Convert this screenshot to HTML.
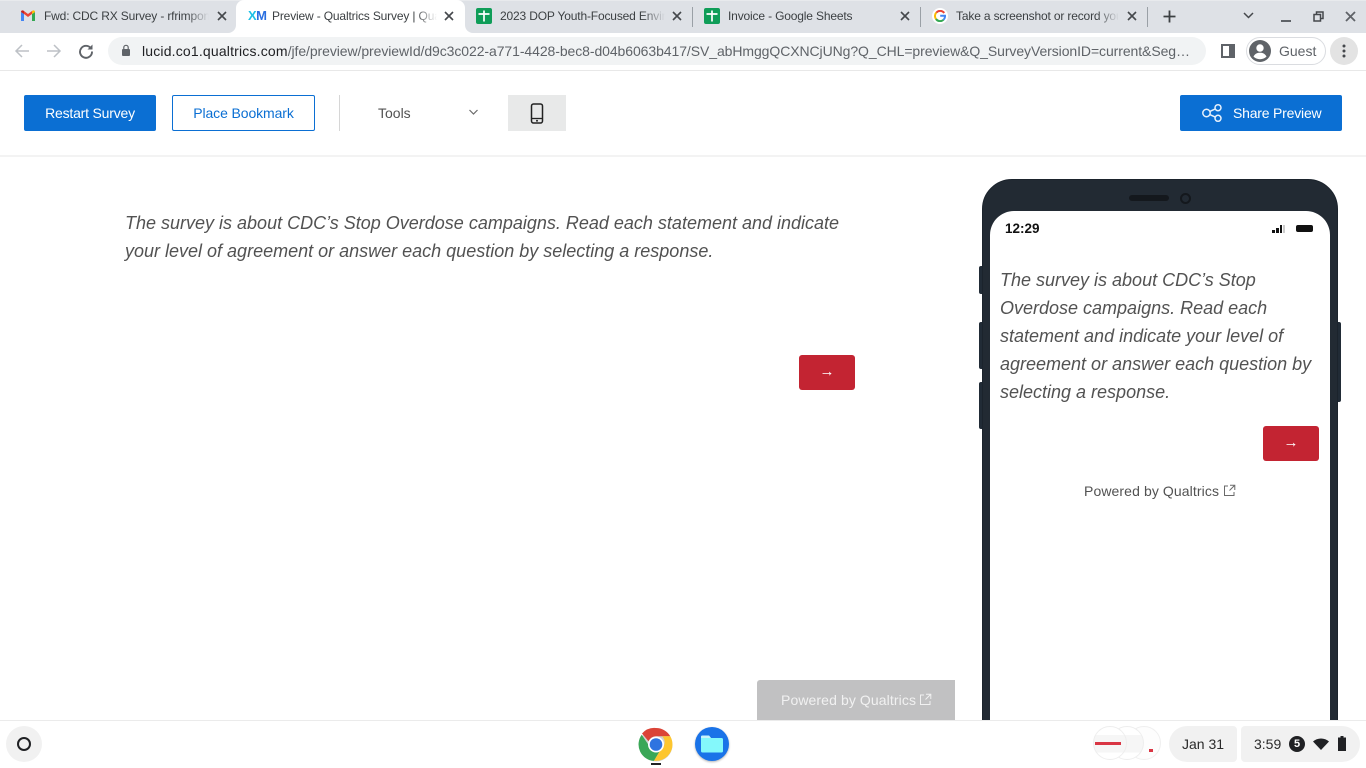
<!DOCTYPE html>
<html lang="en">
<head>
<meta charset="utf-8">
<title>Preview - Qualtrics Survey</title>
<style>
html,body{margin:0;padding:0;width:1366px;height:768px;overflow:hidden;background:#fff;font-family:"Liberation Sans",sans-serif}
div,span,svg{position:absolute;box-sizing:border-box}
.t{white-space:nowrap}
.tab{font-size:12px;color:#3c4043;top:9px;line-height:14px;overflow:hidden;white-space:nowrap;letter-spacing:-.16px}
.fade{top:8px;height:16px;width:22px;background:linear-gradient(to right,rgba(222,225,230,0),#dee1e6)}
.sep{top:7px;width:1px;height:20px;background:#9aa0a6}
.q{font-style:italic;font-size:18px;line-height:28px;color:#525252;white-space:nowrap}
.red{background:#c32432;border-radius:3px;color:#fff;text-align:center;font-size:15px}
.tb{font-size:14px;line-height:36px;text-align:center;border-radius:2px;white-space:nowrap;letter-spacing:-.2px}
</style>
</head>
<body>
<!-- tab strip -->
<div style="left:0;top:0;width:1366px;height:33px;background:#dee1e6"></div>
<div style="left:0;top:0;width:1366px;height:1px;background:#e8eaed"></div>
<div style="left:236px;top:0;width:229px;height:33px;background:#fff;border-radius:8px 8px 0 0"></div>
<div style="left:228px;top:25px;width:8px;height:8px;background:#fff"></div>
<div style="left:228px;top:25px;width:8px;height:8px;background:#dee1e6;border-radius:0 0 8px 0"></div>
<div style="left:465px;top:25px;width:8px;height:8px;background:#fff"></div>
<div style="left:465px;top:25px;width:8px;height:8px;background:#dee1e6;border-radius:0 0 0 8px"></div>
<!-- Gmail -->
<svg style="left:21px;top:10px" width="14" height="12" viewBox="0 0 14 12"><path d="M0 2v9h3V4z" fill="#4285f4"/><path d="M14 2v9h-3V4z" fill="#34a853"/><path d="M3 4v-3l4 3 4-3v3L7 7z" fill="#ea4335"/><path d="M0 2c0-2 2-2 3-1v3z" fill="#c5221f"/><path d="M14 2c0-2-2-2-3-1v3z" fill="#fbbc04"/></svg>
<div class="tab" style="left:44px;width:165px">Fwd: CDC RX Survey - rfrimpong@</div>
<div class="fade" style="left:187px"></div>
<svg style="left:216px;top:10px" width="12" height="12" viewBox="0 0 12 12"><path d="M2 2l8 8M10 2l-8 8" stroke="#45484c" stroke-width="1.6"/></svg>
<!-- XM -->
<div class="t" style="left:248px;top:9px;font-size:13px;font-weight:bold;line-height:14px;letter-spacing:-.6px;color:#1cc0e6">X<span style="position:static;color:#2a6fe0">M</span></div>
<div class="tab" style="left:272px;width:165px">Preview - Qualtrics Survey | Qualtrics</div>
<div style="left:415px;top:8px;width:22px;height:16px;background:linear-gradient(to right,rgba(255,255,255,0),#fff)"></div>
<svg style="left:443px;top:10px" width="12" height="12" viewBox="0 0 12 12"><path d="M2 2l8 8M10 2l-8 8" stroke="#45484c" stroke-width="1.6"/></svg>
<!-- Sheets 1 -->
<div style="left:476px;top:8px;width:16px;height:16px;background:#0f9d58;border-radius:2px"></div>
<svg style="left:476px;top:8px" width="16" height="16" viewBox="0 0 16 16"><path d="M2.500 6h11M8 2.500v11" stroke="#fff" stroke-width="1.700" fill="none"/></svg>
<div class="tab" style="left:500px;width:165px">2023 DOP Youth-Focused Environment</div>
<div class="fade" style="left:643px"></div>
<svg style="left:671px;top:10px" width="12" height="12" viewBox="0 0 12 12"><path d="M2 2l8 8M10 2l-8 8" stroke="#45484c" stroke-width="1.6"/></svg>
<div class="sep" style="left:692px"></div>
<!-- Sheets 2 -->
<div style="left:704px;top:8px;width:16px;height:16px;background:#0f9d58;border-radius:2px"></div>
<svg style="left:704px;top:8px" width="16" height="16" viewBox="0 0 16 16"><path d="M2.500 6h11M8 2.500v11" stroke="#fff" stroke-width="1.700" fill="none"/></svg>
<div class="tab" style="left:728px;width:170px">Invoice - Google Sheets</div>
<svg style="left:899px;top:10px" width="12" height="12" viewBox="0 0 12 12"><path d="M2 2l8 8M10 2l-8 8" stroke="#45484c" stroke-width="1.6"/></svg>
<div class="sep" style="left:920px"></div>
<!-- Google -->
<div style="left:932px;top:8px;width:16px;height:16px;background:#fff;border-radius:50%"></div>
<svg style="left:934px;top:10px" width="12" height="12" viewBox="0 0 12 12"><path d="M10.2 3A5 5 0 0 0 2.3 2.6" stroke="#ea4335" stroke-width="2" fill="none"/><path d="M2.3 2.6A5 5 0 0 0 2 9" stroke="#fbbc04" stroke-width="2" fill="none"/><path d="M2 9a5 5 0 0 0 7.5 .8" stroke="#34a853" stroke-width="2" fill="none"/><path d="M9.5 9.8A5 5 0 0 0 11 5.8H6.2" stroke="#4285f4" stroke-width="2" fill="none"/></svg>
<div class="tab" style="left:956px;width:162px">Take a screenshot or record your</div>
<div class="fade" style="left:1097px"></div>
<svg style="left:1126px;top:10px" width="12" height="12" viewBox="0 0 12 12"><path d="M2 2l8 8M10 2l-8 8" stroke="#45484c" stroke-width="1.6"/></svg>
<div class="sep" style="left:1147px"></div>
<svg style="left:1163px;top:10px" width="13" height="13" viewBox="0 0 13 13"><path d="M6.5 0.5v12M0.5 6.5h12" stroke="#3c4043" stroke-width="1.8"/></svg>
<svg style="left:1243px;top:12px" width="11" height="7" viewBox="0 0 11 7"><path d="M1 1l4.5 4.5L10 1" stroke="#45484c" stroke-width="1.5" fill="none"/></svg>
<div style="left:1281px;top:20px;width:10px;height:2px;background:#5f6368"></div>
<svg style="left:1313px;top:11px" width="11" height="11" viewBox="0 0 11 11"><path d="M3.5 3V1h6.5v6.500H8" stroke="#45484c" stroke-width="1.5" fill="none"/><rect x="1" y="3.500" width="6.500" height="6.500" stroke="#45484c" stroke-width="1.500" fill="none"/></svg>
<svg style="left:1345px;top:11px" width="11" height="11" viewBox="0 0 11 11"><path d="M1 1l9 9M10 1l-9 9" stroke="#5f6368" stroke-width="1.800"/></svg>

<!-- toolbar -->
<svg style="left:14px;top:43px" width="16" height="16" viewBox="0 0 16 16"><path d="M15 8H2M8 2L2 8l6 6" stroke="#bdc1c6" stroke-width="1.500" fill="none"/></svg>
<svg style="left:46px;top:43px" width="16" height="16" viewBox="0 0 16 16"><path d="M1 8h13M8 2l6 6-6 6" stroke="#bdc1c6" stroke-width="1.500" fill="none"/></svg>
<svg style="left:78px;top:43px" width="16" height="16" viewBox="0 0 16 16"><path d="M13 5.500A6 6 0 1 0 14 8.500" stroke="#5f6368" stroke-width="1.900" fill="none"/><path d="M14.500 1.500v5h-5z" fill="#5f6368"/></svg>
<div style="left:108px;top:37px;width:1098px;height:28px;background:#f1f3f4;border-radius:14px"></div>
<svg style="left:121px;top:44px" width="10" height="13" viewBox="0 0 10 13"><rect x="1" y="5" width="8" height="7" rx="1" fill="#5f6368"/><path d="M2.800 5.500V3.500a2.200 2.200 0 0 1 4.400 0v2" stroke="#5f6368" stroke-width="1.200" fill="none"/></svg>
<div class="t" style="left:142px;top:43px;font-size:14px;line-height:16px;color:#5f6368;letter-spacing:-.08px"><span style="position:static;color:#202124;letter-spacing:.177px">lucid.co1.qualtrics.com</span>/jfe/preview/previewId/d9c3c022-a771-4428-bec8-d04b6063b417/SV_abHmggQCXNCjUNg?Q_CHL=preview&amp;Q_SurveyVersionID=current&amp;Seg…</div>
<svg style="left:1221px;top:44px" width="14" height="14" viewBox="0 0 14 14"><rect x="1" y="1" width="12" height="12" fill="none" stroke="#5f6368" stroke-width="2"/><rect x="8" y="1" width="5" height="12" fill="#5f6368"/></svg>
<div style="left:1246px;top:37px;width:80px;height:28px;border:1px solid #dadce0;border-radius:14px;background:#fff"></div>
<svg style="left:1249px;top:40px" width="22" height="22" viewBox="0 0 22 22"><circle cx="11" cy="11" r="11" fill="#5f6368"/><circle cx="11" cy="8" r="3.700" fill="#fff"/><path d="M4.500 16.500c1.500-3 4-3.800 6.500-3.800s5 .8 6.500 3.800c-1.500 1.700-4 2.700-6.500 2.700s-5-1-6.500-2.700z" fill="#fff"/></svg>
<div class="t" style="left:1279px;top:43px;font-size:14px;line-height:16px;color:#5f6368">Guest</div>
<div style="left:1330px;top:37px;width:28px;height:28px;border-radius:50%;background:#e3e3e3"></div>
<svg style="left:1342px;top:44px" width="4" height="14" viewBox="0 0 4 14"><circle cx="2" cy="2" r="1.500" fill="#45484c"/><circle cx="2" cy="7" r="1.500" fill="#45484c"/><circle cx="2" cy="12" r="1.500" fill="#45484c"/></svg>
<div style="left:0;top:70px;width:1366px;height:1px;background:#e8e8e8"></div>

<!-- preview header -->
<div class="tb" style="left:24px;top:95px;width:132px;height:36px;background:#0b6fd3;color:#fff">Restart Survey</div>
<div class="tb" style="left:172px;top:95px;width:143px;height:36px;border:1px solid #0b6fd3;color:#0b6fd3;line-height:34px;letter-spacing:-.1px">Place Bookmark</div>
<div style="left:339px;top:95px;width:1px;height:36px;background:#d6d6d6"></div>
<div class="t" style="left:378px;top:95px;font-size:14px;line-height:36px;color:#525252">Tools</div>
<svg style="left:468px;top:109px" width="11" height="7" viewBox="0 0 11 7"><path d="M1.500 1l4 4 4-4" stroke="#6b6b6b" stroke-width="1.200" fill="none"/></svg>
<div style="left:508px;top:95px;width:58px;height:36px;background:#e8e9e9"></div>
<svg style="left:530px;top:103px" width="14" height="21" viewBox="0 0 14 21"><rect x="1.500" y="1" width="11" height="19" rx="2" fill="none" stroke="#222" stroke-width="1.500"/><path d="M1.500 15.500h11" stroke="#222" stroke-width="1.300"/><circle cx="7" cy="17.800" r="1" fill="#222"/></svg>
<div style="left:1180px;top:95px;width:162px;height:36px;background:#0b6fd3;border-radius:2px"></div>
<svg style="left:1201px;top:103px" width="22" height="20" viewBox="0 0 22 20"><g fill="none" stroke="#e6f0fb" stroke-width="1.500"><circle cx="5.500" cy="10" r="3.700"/><circle cx="17" cy="4.700" r="3"/><circle cx="17" cy="15.300" r="3"/><path d="M8.800 8.400l5.500-2.500M8.800 11.600l5.500 2.500"/></g></svg>
<div class="t" style="left:1233px;top:95px;font-size:14px;line-height:36px;color:#fff;letter-spacing:-.2px">Share Preview</div>
<div style="left:0;top:155px;width:1366px;height:2px;background:#f3f3f3"></div>

<!-- desktop survey -->
<div class="q" style="left:125px;top:209px">The survey is about CDC’s Stop Overdose campaigns. Read each statement and indicate<br>your level of agreement or answer each question by selecting a response.</div>
<div class="red" style="left:799px;top:355px;width:56px;height:35px;line-height:34px">→</div>
<div class="t" style="left:757px;top:680px;width:198px;height:40px;background:#c1c1c2;border-radius:3px 0 0 0;color:#f1f1f1;font-size:14px;line-height:40px;padding-left:24px;letter-spacing:.1px">Powered by Qualtrics</div>
<svg style="left:919px;top:693px" width="13" height="13" viewBox="0 0 13 13"><path d="M5 2H1.500v9.500H11V8M7 1.200h4.800V6M11.600 1.400L6.500 6.500" fill="none" stroke="#f1f1f1" stroke-width="1"/></svg>

<!-- phone -->
<div style="left:979px;top:266px;width:4px;height:28px;background:#212b36;border-radius:2px 0 0 2px"></div>
<div style="left:979px;top:322px;width:4px;height:47px;background:#212b36;border-radius:2px 0 0 2px"></div>
<div style="left:979px;top:382px;width:4px;height:47px;background:#212b36;border-radius:2px 0 0 2px"></div>
<div style="left:1337px;top:322px;width:4px;height:80px;background:#212b36;border-radius:0 2px 2px 0"></div>
<div style="left:982px;top:179px;width:356px;height:560px;background:#222a33;border-radius:30px 30px 0 0;border:1px solid #1b232c"></div>
<div style="left:990px;top:211px;width:340px;height:530px;background:#fff;border-radius:24px 24px 0 0"></div>
<div style="left:1129px;top:195px;width:40px;height:6px;background:#14181d;border-radius:3px"></div>
<div style="left:1180px;top:193px;width:11px;height:11px;border-radius:50%;background:#222a33;border:2px solid #14181d"></div>
<div class="t" style="left:1005px;top:221px;font-size:13.500px;font-weight:bold;line-height:15px;color:#111">12:29</div>
<svg style="left:1271px;top:224px" width="15" height="10" viewBox="0 0 15 10"><rect x="1" y="6" width="3" height="3" fill="#111"/><rect x="5" y="4" width="3" height="5" fill="#111"/><rect x="9" y="1" width="2" height="8" fill="#111"/><rect x="12" y="1" width="2" height="8" fill="#ccc"/></svg>
<div style="left:1296px;top:225px;width:17px;height:7px;background:#111;border-radius:2px"></div>
<div class="q" style="left:1000px;top:266px">The survey is about CDC’s Stop<br>Overdose campaigns. Read each<br>statement and indicate your level of<br>agreement or answer each question by<br>selecting a response.</div>
<div class="red" style="left:1263px;top:426px;width:56px;height:35px;line-height:34px">→</div>
<div class="t" style="left:1084px;top:483px;font-size:14px;line-height:16px;color:#525252;letter-spacing:.1px">Powered by Qualtrics</div>
<svg style="left:1223px;top:484px" width="13" height="13" viewBox="0 0 13 13"><path d="M5 2H1.500v9.500H11V8M7 1.200h4.800V6M11.600 1.400L6.500 6.500" fill="none" stroke="#6a6a6a" stroke-width="1"/></svg>

<!-- shelf -->
<div style="left:0;top:720px;width:1366px;height:48px;background:#fff;border-top:1px solid #ebebeb"></div>
<div style="left:6px;top:726px;width:36px;height:36px;border-radius:50%;background:#f1f1f1"></div>
<div style="left:17px;top:737px;width:14px;height:14px;border-radius:50%;border:2px solid #202124"></div>
<!-- chrome -->
<svg style="left:638px;top:726px" width="36" height="36" viewBox="0 0 36 36">
<circle cx="18" cy="19" r="16.500" fill="#d0d0d0"/>
<path d="M18 2a16.500 16.500 0 0 1 14.300 8.250H18a8 8 0 0 0-7.500 5L4 7.500A16.500 16.500 0 0 1 18 2z" fill="#db4437"/>
<path d="M3.700 8.700A16.500 16.500 0 0 0 16 34.900l6.500-11a8 8 0 0 1-11-3.500z" fill="#3aa757"/>
<path d="M32.300 10.250A16.500 16.500 0 0 1 16 34.800l7-11.800a8 8 0 0 0 1-12.750z" fill="#fdc62f"/>
<circle cx="18" cy="18.500" r="8" fill="#fff"/><circle cx="18" cy="18.500" r="6.300" fill="#2f74e0"/>
</svg>
<div style="left:651px;top:763px;width:10px;height:2px;background:#202124"></div>
<!-- files -->
<div style="left:695px;top:727px;width:34px;height:34px;border-radius:50%;background:#1a73e8;box-shadow:0 1px 2px rgba(0,0,0,.3)"></div>
<svg style="left:701px;top:735px" width="22" height="18" viewBox="0 0 22 18"><path d="M0 2a1.500 1.500 0 0 1 1.500-1.500H8l2 2.500h10.500A1.500 1.500 0 0 1 22 4.500V16a1.500 1.500 0 0 1-1.500 1.500h-19A1.500 1.500 0 0 1 0 16z" fill="#84f8fb"/><path d="M0 2a1.500 1.500 0 0 1 1.500-1.500H8l2 2.500H0z" fill="#c8f4fa"/></svg>
<!-- tray -->
<div style="left:1127px;top:726px;width:34px;height:34px;border-radius:50%;background:#fdfdfd;border:1px solid #efefef"></div>
<div style="left:1110px;top:726px;width:34px;height:34px;border-radius:50%;background:linear-gradient(#fff 0,#fff 25%,#f6f6f6 25%,#f6f6f6 80%,#fff 80%);border:1px solid #eee"></div>
<div style="left:1093px;top:726px;width:34px;height:34px;border-radius:50%;background:linear-gradient(#fff 0,#fff 25%,#f6f6f6 25%,#f6f6f6 80%,#fff 80%);border:1px solid #eee"></div>
<div style="left:1095px;top:742px;width:26px;height:3px;background:#d93644"></div>
<div style="left:1149px;top:749px;width:4px;height:3px;background:#d93644"></div>
<div style="left:1169px;top:726px;width:68px;height:36px;background:#f1f1f1;border-radius:18px 4px 4px 18px"></div>
<div class="t" style="left:1182px;top:736px;font-size:14px;line-height:16px;color:#2a2a2a">Jan 31</div>
<div style="left:1241px;top:726px;width:119px;height:36px;background:#f1f1f1;border-radius:4px 18px 18px 4px"></div>
<div class="t" style="left:1254px;top:736px;font-size:14px;line-height:16px;color:#2a2a2a">3:59</div>
<div style="left:1289px;top:736px;width:16px;height:16px;border-radius:50%;background:#202124;color:#fff;font-size:11px;line-height:16px;text-align:center;font-weight:bold">5</div>
<svg style="left:1313px;top:738px" width="16" height="12" viewBox="0 0 16 12"><path d="M0 3.500A12 12 0 0 1 16 3.500L8 12z" fill="#202124"/></svg>
<svg style="left:1337px;top:736px" width="10" height="15" viewBox="0 0 10 15"><path d="M3.500 0h3v1.500H9V15H1V1.500h2.500z" fill="#202124"/></svg>
</body>
</html>
